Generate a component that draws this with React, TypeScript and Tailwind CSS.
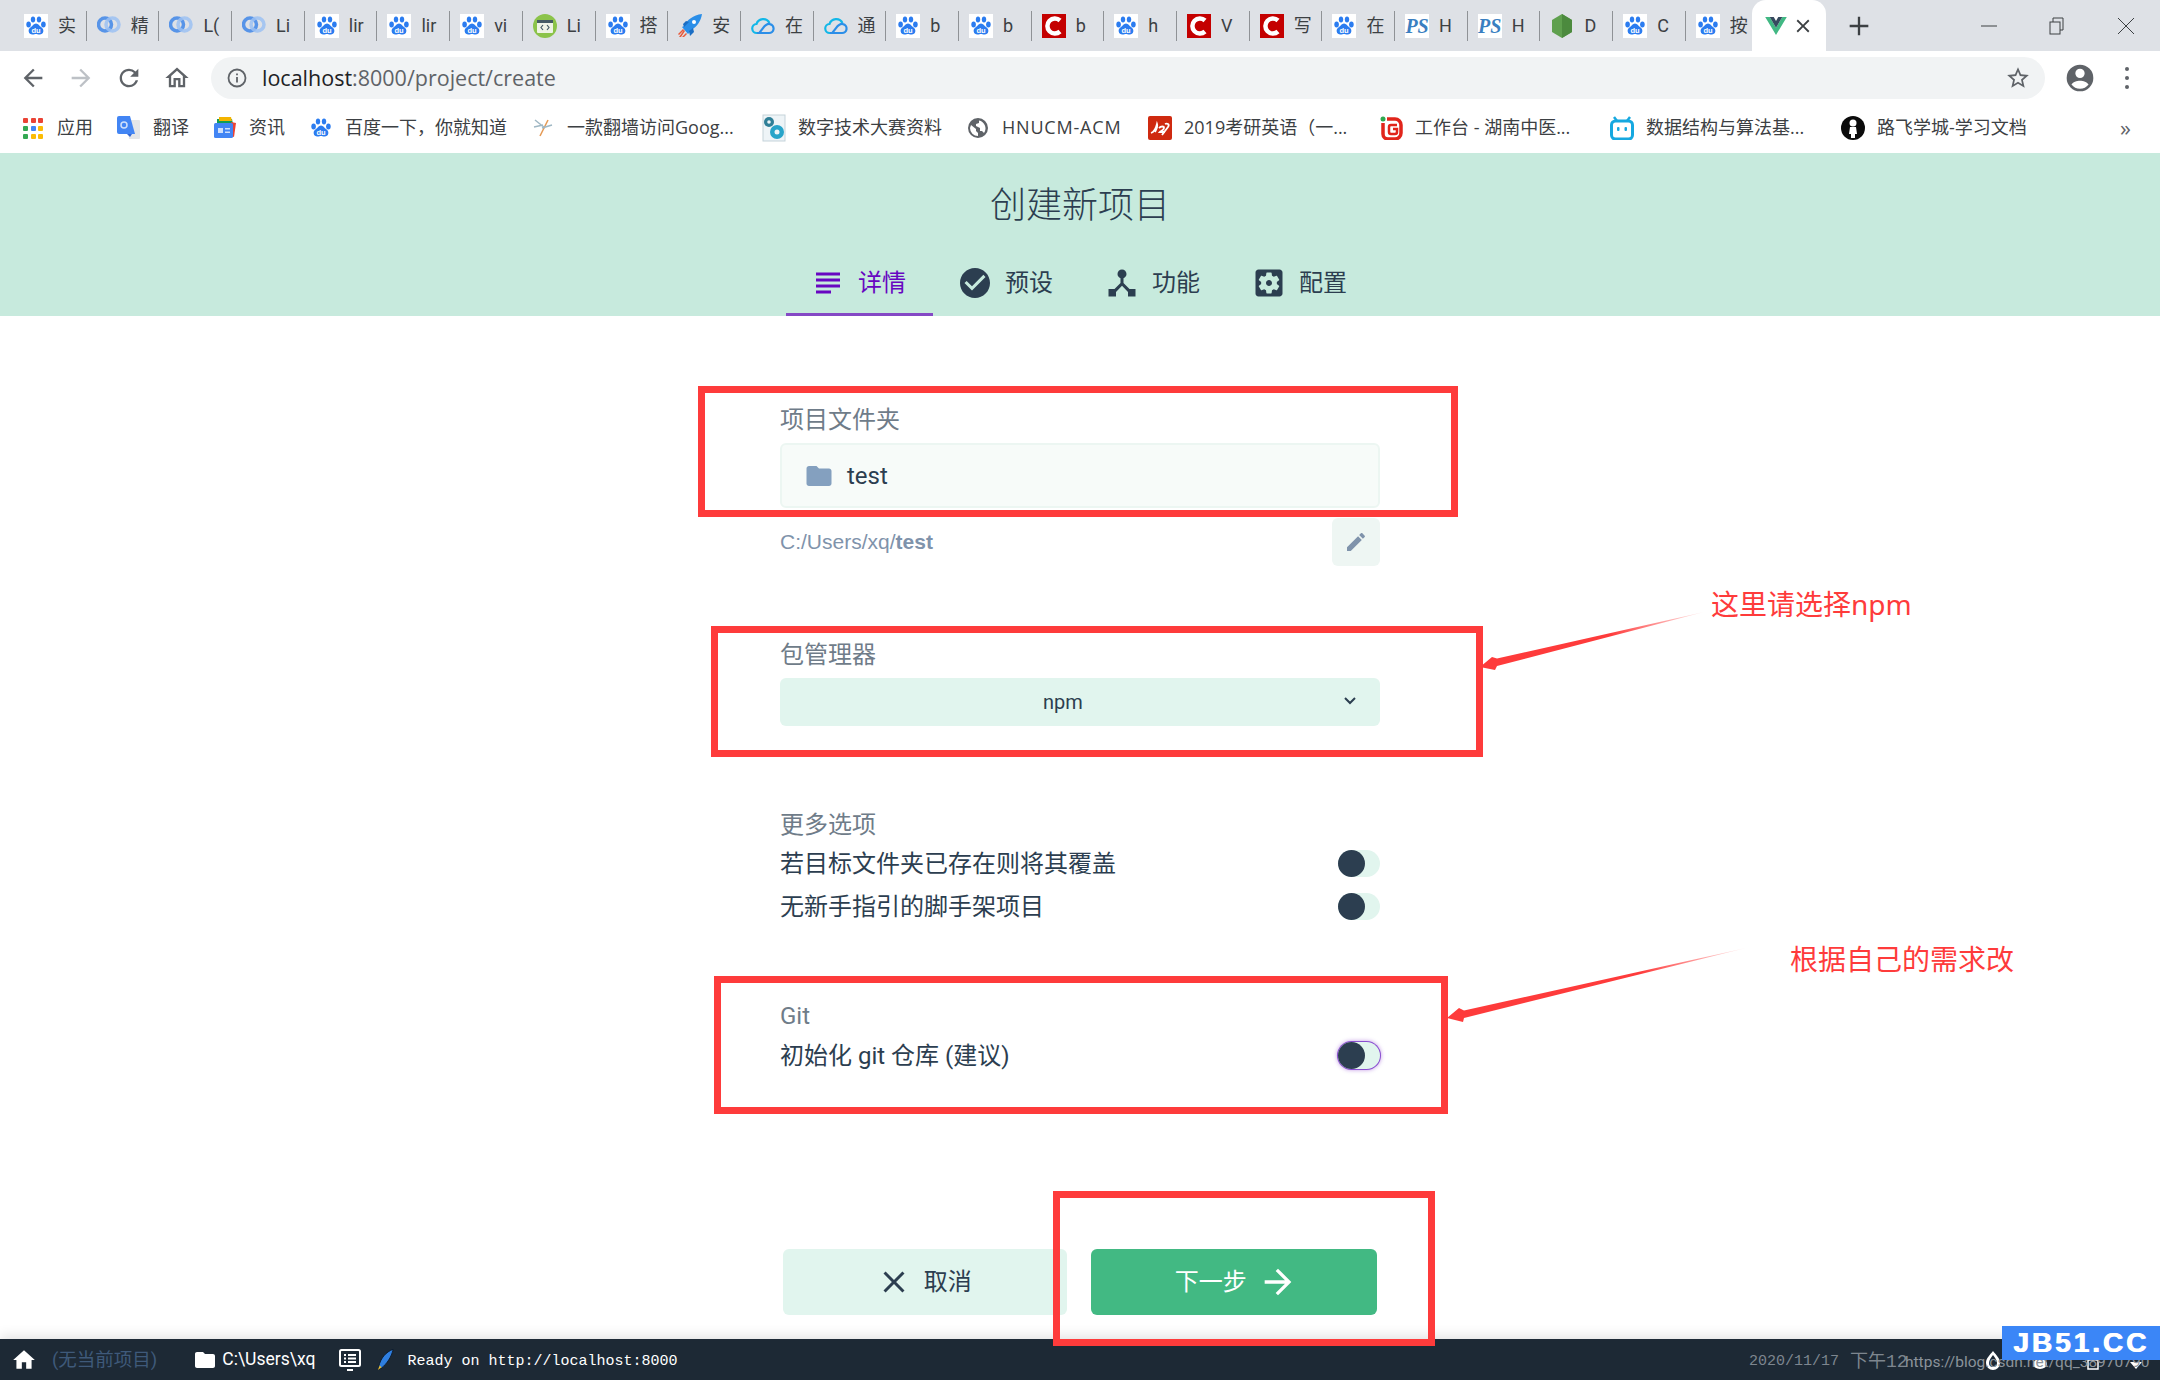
import React from "react";

const sans = "font-['Roboto','Noto_Sans_CJK_SC',sans-serif]";

const Baidu = ({ bg = true }: { bg?: boolean }) => (
  <svg viewBox="0 0 24 24" className="w-6 h-6 shrink-0">
    {bg && <rect width="24" height="24" fill="#fff" />}
    <g fill="#2b7cf0">
      <ellipse cx="4.6" cy="10.5" rx="2.3" ry="2.9" />
      <ellipse cx="9" cy="5.6" rx="2.2" ry="3" />
      <ellipse cx="15" cy="5.6" rx="2.2" ry="3" />
      <ellipse cx="19.4" cy="10.5" rx="2.3" ry="2.9" />
      <path d="M12 9.5c-2.4 0-3.2 2.4-5 3.6-1.8 1.2-2.6 2.6-2.3 4.4.4 2.4 2.4 3.2 4 3 1.5-.2 2.2-.6 3.3-.6s1.8.4 3.3.6c1.6.2 3.6-.6 4-3 .3-1.8-.5-3.200-2.300-4.400-1.800-1.200-2.600-3.600-5-3.600z" />
    </g>
    <text x="12" y="19" textAnchor="middle" fontSize="7.500" fontWeight="700" fill="#fff" fontFamily="Liberation Sans">du</text>
  </svg>
);

const CloudRings = () => (
  <svg viewBox="0 0 24 24" className="w-6 h-6 shrink-0" fill="none">
    <ellipse cx="8" cy="10.500" rx="6.500" ry="6.500" stroke="#3f86e8" strokeWidth="3.500" opacity="0.85" />
    <ellipse cx="15.500" cy="10.500" rx="6.500" ry="6.500" stroke="#9cc1f2" strokeWidth="3.500" opacity="0.85" />
  </svg>
);

const Rocket = () => (
  <svg viewBox="0 0 24 24" className="w-6 h-6 shrink-0">
    <path d="M24 0C15 1 9 6 6 12l-2 1 6 7 2-2c1-1 1-2 1-2 6-3 10-9 11-16z" fill="#2a8ee8" />
    <path d="M5 10l3-3 3 1-5 5zM15 14l1 4-4 4-1-5z" fill="#1b6ec4" />
    <path d="M1 23l5-7 1 1-4 6zM4 23l4-4 1 1-3 3zM0 20l5-5 1 1-5 5z" fill="#e8593a" />
    <circle cx="16" cy="8" r="2" fill="#fff" />
  </svg>
);

const GreenCode = () => (
  <svg viewBox="0 0 24 24" className="w-6 h-6 shrink-0">
    <circle cx="12" cy="12" r="12" fill="#8bc34a" />
    <rect x="4" y="6" width="16" height="13" rx="1" fill="#eef3e6" />
    <rect x="4" y="6" width="16" height="3" fill="#455a64" />
    <path d="M10 11l-2 2.500 2 2.500M14 11l2 2.500-2 2.500" stroke="#455a64" strokeWidth="1.200" fill="none" />
  </svg>
);

const TCloud = () => (
  <svg viewBox="0 0 24 24" className="w-6 h-6 shrink-0" fill="none" stroke="#12b7e8" strokeWidth="2.200">
    <path d="M6 19a4.500 4.500 0 0 1-.5-9A7 7 0 0 1 18.500 9" />
    <path d="M6 19h12a4.500 4.500 0 0 0 1-8.900c-3-.8-5 1.400-7 4l-3.500 4.500" stroke="#2b8ee8" />
  </svg>
);

const RedC = () => (
  <svg viewBox="0 0 24 24" className="w-6 h-6 shrink-0">
    <rect width="24" height="24" fill="#c40000" />
    <path d="M18 6.500a7.500 7.500 0 1 0 0 11" fill="none" stroke="#fff" strokeWidth="4.500" />
  </svg>
);

const Ps = () => (
  <span className="w-6 h-6 shrink-0 bg-white flex items-center justify-center text-[#3a7fc1] text-[20px] leading-6 italic font-bold font-['Liberation_Serif',serif]">
    PS
  </span>
);

const NodeHex = () => (
  <svg viewBox="0 0 24 24" className="w-6 h-6 shrink-0">
    <path d="M12 0l10 6v12l-10 6-10-6V6z" fill="#5fa04e" />
    <path d="M12 0l10 6v12l-10 6z" fill="#4c8a3e" />
  </svg>
);

const Vue = () => (
  <svg viewBox="0 0 24 20" className="w-[22px] h-[18px] shrink-0">
    <path d="M0 0h5l7 12 7-12h5L12 20z" fill="#41b883" />
    <path d="M5 0h4.500L12 4.500 14.500 0H19l-7 12z" fill="#35495e" />
  </svg>
);

const M = ({ d, className }: { d: string; className: string }) => (
  <svg viewBox="0 0 24 24" className={className} fill="currentColor">
    <path d={d} />
  </svg>
);

const paths = {
  subject: "M14 17H4v2h10v-2zm6-8H4v2h16V9zM4 15h16v-2H4v2zM4 5v2h16V5H4z",
  check: "M12 2C6.480 2 2 6.480 2 12s4.480 10 10 10 10-4.480 10-10S17.520 2 12 2zm-2 15l-5-5 1.410-1.410L10 14.170l7.590-7.590L19 8l-9 9z",
  hub: "M17 16l-4-4V8.820C14.160 8.400 15 7.300 15 6c0-1.660-1.340-3-3-3S9 4.340 9 6c0 1.300.840 2.400 2 2.820V12l-4 4H3v5h5v-3.050l4-4.200 4 4.200V21h5v-5h-4z",
  settings: "M12 10c-1.100 0-2 .9-2 2s.9 2 2 2 2-.9 2-2-.9-2-2-2zm7-7H5c-1.110 0-2 .9-2 2v14c0 1.100.890 2 2 2h14c1.110 0 2-.9 2-2V5c0-1.100-.890-2-2-2zm-1.750 9c0 .230-.020.460-.050.680l1.480 1.160c.130.110.170.300.080.450l-1.400 2.420c-.090.150-.270.210-.430.150l-1.740-.700c-.360.280-.760.510-1.180.690l-.260 1.850c-.030.170-.180.300-.350.300h-2.800c-.170 0-.320-.130-.350-.290l-.260-1.850c-.430-.180-.820-.410-1.180-.690l-1.740.700c-.160.060-.340 0-.430-.150l-1.400-2.420c-.090-.150-.050-.340.080-.450l1.480-1.160c-.030-.230-.050-.460-.050-.690 0-.230.020-.460.050-.680l-1.480-1.160c-.130-.110-.170-.300-.080-.450l1.400-2.420c.090-.150.270-.210.430-.150l1.740.700c.360-.280.760-.510 1.180-.690l.260-1.850c.030-.170.180-.300.350-.300h2.800c.170 0 .320.130.350.290l.260 1.850c.430.180.820.410 1.180.690l1.740-.700c.160-.060.340 0 .430.150l1.400 2.420c.090.150.050.340-.08.450l-1.480 1.160c.030.230.050.460.050.690z",
  folder: "M10 4H4c-1.100 0-1.990.9-1.990 2L2 18c0 1.100.9 2 2 2h16c1.100 0 2-.9 2-2V8c0-1.100-.9-2-2-2h-8l-2-2z",
  edit: "M3 17.250V21h3.750L17.810 9.940l-3.750-3.750L3 17.250zM20.710 7.040c.390-.390.390-1.020 0-1.410l-2.340-2.340c-.390-.390-1.020-.390-1.410 0l-1.830 1.830 3.750 3.750 1.830-1.830z",
  home: "M10 20v-6h4v6h5v-8h3L12 3 2 12h3v8z",
  close: "M19 6.410L17.590 5 12 10.590 6.410 5 5 6.410 10.590 12 5 17.590 6.410 19 12 13.410 17.590 19 19 17.590 13.410 12z",
  arrow: "M12 4l-1.410 1.410L16.170 11H4v2h12.170l-5.580 5.590L12 20l8-8z",
};

const tabs: [React.ReactNode, string][] = [
  [<Baidu />, "实"], [<CloudRings />, "精"], [<CloudRings />, "L("], [<CloudRings />, "Li"],
  [<Baidu />, "lir"], [<Baidu />, "lir"], [<Baidu />, "vi"], [<GreenCode />, "Li"],
  [<Baidu />, "搭"], [<Rocket />, "安"], [<TCloud />, "在"], [<TCloud />, "通"],
  [<Baidu />, "b"], [<Baidu />, "b"], [<RedC />, "b"], [<Baidu />, "h"],
  [<RedC />, "V"], [<RedC />, "写"], [<Baidu />, "在"], [<Ps />, "H"],
  [<Ps />, "H"], [<NodeHex />, "D"], [<Baidu />, "C"], [<Baidu />, "按"],
];

const AppsIcon = () => (
  <div className="w-6 h-6 shrink-0 grid grid-cols-3 gap-[3px] p-[2px]">
    {["#ea4335", "#ea4335", "#ea4335", "#34a853", "#4285f4", "#fbbc05", "#34a853", "#fbbc05", "#fbbc05"].map((c, i) => (
      <span key={i} className="w-[5px] h-[5px] rounded-[1px]" style={{ background: c }} />
    ))}
  </div>
);

const Translate = () => (
  <svg viewBox="0 0 24 24" className="w-6 h-6 shrink-0">
    <path d="M10 4h12a1 1 0 0 1 1 1v17a1 1 0 0 1-1 1H12z" fill="#e4e6e8" />
    <path d="M2 0h11l5 18H2a2 2 0 0 1-2-2V2a2 2 0 0 1 2-2z" fill="#4285f4" />
    <circle cx="7" cy="9" r="3" fill="none" stroke="#cfe0fb" strokeWidth="1.500" />
    <path d="M10 18l3 3 2-3z" fill="#3367d6" />
  </svg>
);

const News = () => (
  <svg viewBox="0 0 24 24" className="w-6 h-6 shrink-0">
    <path d="M4 3h15l1 5H4z" fill="#0f9d58" />
    <path d="M6 1h12l1 4H6z" fill="#f4b400" />
    <path d="M18 6l5 1-2 14-3-1z" fill="#ea4335" />
    <rect x="1" y="7" width="19" height="15" rx="1.500" fill="#4285f4" />
    <rect x="5" y="12" width="5" height="5" fill="#cfe0fb" />
    <rect x="12" y="12" width="5" height="1.500" fill="#cfe0fb" />
    <rect x="12" y="15.500" width="5" height="1.500" fill="#cfe0fb" />
  </svg>
);

const Dragonfly = () => (
  <svg viewBox="0 0 24 24" className="w-6 h-6 shrink-0" fill="none" strokeWidth="1.500">
    <path d="M17 4L9 20" stroke="#e59a55" />
    <path d="M4 4l10 8M21 9l-10 3M3 11l9-2" stroke="#9fb7c4" />
  </svg>
);

const Gears = () => (
  <svg viewBox="0 0 24 28" className="w-6 h-7 shrink-0">
    <rect x="1" y="1" width="22" height="26" fill="#eef4f7" stroke="#c5d3da" />
    <circle cx="7" cy="8" r="5" fill="#2f7f97" />
    <circle cx="15" cy="18" r="7" fill="#28a4c9" />
    <circle cx="15" cy="18" r="2.500" fill="#eef4f7" />
    <circle cx="7" cy="8" r="1.800" fill="#eef4f7" />
  </svg>
);

const Globe = () => (
  <svg viewBox="0 0 24 24" className="w-6 h-6 shrink-0" fill="#5f6368">
    <path d="M12 2a10 10 0 1 0 0 20 10 10 0 0 0 0-20zM4 12l1-3 5 4v2l2 2v3a8 8 0 0 1-8-8zm14 5l-2-2h-2v-3l-4-2V8l3-1V4.500a8 8 0 0 1 5 12.500z" />
  </svg>
);

const Kaoyan = () => (
  <svg viewBox="0 0 24 24" className="w-6 h-6 shrink-0">
    <rect width="24" height="24" rx="2" fill="#cf2a10" />
    <path d="M3 17c3-1 5-5 6-9 1 3-1 6-2 8M11 12c2-2 5-2 5 0s-3 3-4 4h5M17 8c2-1 5 0 3 3l-6 8" stroke="#fff" strokeWidth="1.800" fill="none" />
  </svg>
);

const IG = () => (
  <svg viewBox="0 0 24 24" className="w-6 h-6 shrink-0">
    <circle cx="4" cy="3" r="2.500" fill="#2fa84f" />
    <path d="M4 7v11a5 5 0 0 0 5 5h7a6 6 0 0 0 6-6V9a6 6 0 0 0-6-6H8" fill="none" stroke="#e1251b" strokeWidth="3.500" />
    <path d="M18 9h-6a2 2 0 0 0-2 2v5a2 2 0 0 0 2 2h4a2 2 0 0 0 2-2v-3h-4" fill="none" stroke="#e1251b" strokeWidth="2.500" />
  </svg>
);

const Bili = () => (
  <svg viewBox="0 0 24 24" className="w-6 h-6 shrink-0">
    <path d="M7 5L4 1M17 5l3-4" stroke="#16a8e0" strokeWidth="2.500" />
    <rect x="1.500" y="5" width="21" height="18" rx="4" fill="none" stroke="#16a8e0" strokeWidth="3" />
    <rect x="7" y="11" width="2.500" height="4" rx="1" fill="#16a8e0" />
    <rect x="14.500" y="11" width="2.500" height="4" rx="1" fill="#16a8e0" />
  </svg>
);

const Luffy = () => (
  <svg viewBox="0 0 24 24" className="w-6 h-6 shrink-0">
    <circle cx="12" cy="12" r="12" fill="#0b0b0b" />
    <circle cx="12" cy="7" r="3.500" fill="#fff" />
    <path d="M9 11h6l1 7h-2v4h-4v-4H8z" fill="#fff" />
  </svg>
);

const bookmarks = [
  { icon: <AppsIcon />, label: "应用", w: "w-[36px]" },
  { icon: <Translate />, label: "翻译", w: "w-[36px]" },
  { icon: <News />, label: "资讯", w: "w-[36px]" },
  { icon: <Baidu bg={false} />, label: "百度一下，你就知道", w: "w-[162px]" },
  { icon: <Dragonfly />, label: "一款翻墙访问Goog...", w: "w-[171px]" },
  { icon: <Gears />, label: "数字技术大赛资料", w: "w-[144px]" },
  { icon: <Globe />, label: "HNUCM-ACM", w: "w-[122px] tracking-[0.8px]" },
  { icon: <Kaoyan />, label: "2019考研英语（一...", w: "w-[171px]" },
  { icon: <IG />, label: "工作台 - 湖南中医...", w: "w-[171px]" },
  { icon: <Bili />, label: "数据结构与算法基...", w: "w-[171px]" },
  { icon: <Luffy />, label: "路飞学城-学习文档", w: "w-[151px]" },
];

const steps = [
  { label: "详情", icon: paths.subject, active: true },
  { label: "预设", icon: paths.check },
  { label: "功能", icon: paths.hub },
  { label: "配置", icon: paths.settings },
];

const Toggle = ({ focus }: { focus?: boolean }) => (
  <div
    className={`w-[42px] h-[27px] rounded-full bg-[#e1f5ee] ${
      focus ? "shadow-[0_0_0_1px_#8a4fd0,0_0_4px_1px_rgba(104,6,193,0.4)]" : ""
    }`}
  >
    <div className="w-[27px] h-[27px] rounded-full bg-[#2c3e50]" />
  </div>
);

const Row = ({ label, focus, className }: { label: string; focus?: boolean; className: string }) => (
  <div className={`flex items-center justify-between h-[30px] text-[24px] text-[#2c3e50] ${className}`}>
    <span className="pt-[2px]">{label}</span>
    <Toggle focus={focus} />
  </div>
);

const Label = ({ children, className }: { children: string; className: string }) => (
  <div className={`h-[30px] leading-[30px] text-[24px] text-[#6f7c89] ${className}`}>{children}</div>
);

export default function App() {
  return (
    <div className={`relative w-[2160px] h-[1380px] overflow-hidden flex flex-col bg-white ${sans}`}>
      {/* browser tabs */}
      <div className="h-[51px] shrink-0 bg-[#dee1e6] flex pl-[14px] text-[18px] text-[#3c4043]">
        {tabs.map(([icon, title], i) => (
          <div key={i} className="w-[72.7px] h-full flex items-center relative pl-[10px]">
            {icon}
            <span className="ml-[10px] w-[26px] overflow-hidden whitespace-nowrap">{title}</span>
            {i < 23 && <span className="absolute right-0 top-[11px] h-[30px] w-px bg-[#8f9296]" />}
          </div>
        ))}
        <div className="w-[74px] h-full -ml-[7px] bg-white rounded-t-[14px] flex items-center pl-[13px]">
          <Vue />
          <M d={paths.close} className="w-[22px] h-[22px] ml-[5px] text-[#3c4043]" />
        </div>
        <M d="M11 4h2v7h7v2h-7v7h-2v-7H4v-2h7z" className="w-[28px] h-[28px] self-center ml-[19px] text-[#3c4043]" />
        <div className="ml-auto flex items-center text-[#3c4043]">
          <svg viewBox="0 0 16 16" className="w-4 h-4 mr-[52px]" stroke="currentColor" fill="none"><path d="M0 8h16" /></svg>
          <svg viewBox="0 0 16 18" className="w-4 h-[18px] mr-[52px]" stroke="currentColor" fill="none"><rect x="1" y="5" width="10" height="12" /><path d="M4 5V1h10v12h-3" /></svg>
          <svg viewBox="0 0 18 18" className="w-[18px] h-[18px] mr-[25px]" stroke="currentColor" fill="none"><path d="M1 1l16 16M17 1L1 17" /></svg>
        </div>
      </div>

      {/* toolbar */}
      <div className="h-[54px] shrink-0 bg-white flex items-center pl-[19px] text-[#5f6368]">
        <M d="M20 11H7.830l5.590-5.590L12 4l-8 8 8 8 1.410-1.410L7.830 13H20z" className="w-[28px] h-[28px]" />
        <M d={paths.arrow} className="w-[28px] h-[28px] ml-[20px] text-[#bdc1c6]" />
        <M d="M17.650 6.350A7.958 7.958 0 0 0 12 4c-4.420 0-7.990 3.580-7.990 8s3.570 8 7.990 8c3.730 0 6.840-2.550 7.730-6h-2.080A5.990 5.990 0 0 1 12 18c-3.310 0-6-2.690-6-6s2.690-6 6-6c1.660 0 3.140.690 4.220 1.780L13 11h7V4l-2.350 2.350z" className="w-[28px] h-[28px] ml-[20px]" />
        <M d="M12 5.690l5 4.500V18h-2v-6H9v6H7v-7.810l5-4.500M12 3L2 12h3v8h6v-6h2v6h6v-8h3L12 3z" className="w-[28px] h-[28px] ml-[20px]" />
        <div className="ml-[20px] w-[1834px] h-[42px] rounded-full bg-[#f1f3f4] flex items-center pl-[16px] pr-[14px] text-[21.500px] font-['Open_Sans',sans-serif]">
          <svg viewBox="0 0 20 20" className="w-5 h-5" fill="none" stroke="#5f6368" strokeWidth="1.800">
            <circle cx="10" cy="10" r="8.500" />
            <path d="M10 9v5.500M10 5.500v1.800" />
          </svg>
          <span className="ml-[15px]">
            <span className="text-[#202124]">localhost</span>:8000/project/create
          </span>
          <M d="M22 9.240l-7.190-.620L12 2 9.190 8.630 2 9.240l5.460 4.730L5.820 21 12 17.270 18.180 21l-1.630-7.030L22 9.240zM12 15.400l-3.760 2.270 1-4.280-3.320-2.880 4.380-.380L12 6.100l1.710 4.040 4.380.380-3.320 2.880 1 4.280L12 15.400z" className="w-[26px] h-[26px] ml-auto" />
        </div>
        <M d="M12 2a10 10 0 1 0 0 20 10 10 0 0 0 0-20zm0 3a3.500 3.500 0 1 1 0 7 3.500 3.500 0 0 1 0-7zm0 15a8 8 0 0 1-6.400-3.200c.9-1.800 4-2.800 6.400-2.800s5.500 1 6.400 2.800A8 8 0 0 1 12 20z" className="w-[32px] h-[32px] ml-[19px]" />
        <div className="ml-[29px] flex flex-col gap-[5px]">
          <span className="w-1 h-1 rounded-full bg-[#5f6368]" />
          <span className="w-1 h-1 rounded-full bg-[#5f6368]" />
          <span className="w-1 h-1 rounded-full bg-[#5f6368]" />
        </div>
      </div>

      {/* bookmarks */}
      <div className="h-[48px] shrink-0 bg-white flex items-center pl-[21px] pb-[3px] gap-[24px] text-[18px] text-[#3c4043] font-['Open_Sans','Noto_Sans_CJK_SC',sans-serif]">
        {bookmarks.map((b) => (
          <div key={b.label} className="flex items-center gap-[12px] shrink-0">
            {b.icon}
            <span className={`${b.w} whitespace-nowrap overflow-hidden`}>{b.label}</span>
          </div>
        ))}
        <span className="absolute left-[2120px] text-[22px] text-[#5f6368]">»</span>
      </div>

      {/* vue ui header */}
      <div className="h-[163px] shrink-0 bg-[#c7eadd] flex flex-col items-center text-[#2c3e50]">
        <div className="h-[94px] pt-[28px] text-[36px] leading-[50px] font-light">创建新项目</div>
        <div className="mt-auto flex">
          {steps.map((s) => (
            <div
              key={s.label}
              className={`w-[147px] h-[69px] pt-[6px] flex items-center pl-[24px] gap-[12px] text-[24px] ${
                s.active ? "text-[#6806c1] border-b-[3px] border-[#8549c5]" : "border-b-[3px] border-transparent"
              }`}
            >
              <M d={s.icon} className="w-[36px] h-[36px] shrink-0" />
              <span>{s.label}</span>
            </div>
          ))}
        </div>
      </div>

      {/* form */}
      <div className="flex-1 flex flex-col items-center">
        <div className="w-[600px] flex flex-col">
          <Label className="mt-[89px]">项目文件夹</Label>
          <div className="mt-[8px] h-[65px] rounded-[6px] bg-[#f7fbf9] border-2 border-[#ecf6f2] flex items-center pl-[22px] text-[24px] text-[#2c3e50]">
            <M d={paths.folder} className="w-[30px] h-[30px] text-[#84a0bf]" />
            <span className="ml-[13px]">test</span>
          </div>
          <div className="mt-[10px] h-[48px] flex items-center justify-between text-[21px] text-[#7f93ab] font-['Liberation_Sans',sans-serif]">
            <span>
              C:/Users/xq/<b>test</b>
            </span>
            <div className="w-[48px] h-[48px] rounded-[6px] bg-[#eef6f3] flex items-center justify-center">
              <M d={paths.edit} className="w-[24px] h-[24px] text-[#7f93ab]" />
            </div>
          </div>
          <Label className="mt-[74px]">包管理器</Label>
          <div className="mt-[8px] h-[48px] rounded-[6px] bg-[#e1f5ee] relative flex items-center justify-center pr-[34px] text-[20px] text-[#2c3e50]">
            <span>npm</span>
            <svg viewBox="0 0 12 8" className="absolute right-[24px] top-[19px] w-[12px] h-[8px]" fill="none" stroke="#2c3e50" strokeWidth="2">
              <path d="M1 1l5 5 5-5" />
            </svg>
          </div>
          <Label className="mt-[84px]">更多选项</Label>
          <Row className="mt-[8px]" label="若目标文件夹已存在则将其覆盖" />
          <Row className="mt-[13px]" label="无新手指引的脚手架项目" />
          <Label className="mt-[80px]">Git</Label>
          <Row className="mt-[9px]" label="初始化 git 仓库 (建议)" focus />
        </div>
        <div className="mt-[179px] w-[594px] flex gap-[24px] text-[24px]">
          <div className="flex-1 h-[66px] rounded-[6px] bg-[#e1f5ee] text-[#2c3e50] flex items-center justify-center gap-[12px] pr-[2px]">
            <M d={paths.close} className="w-[36px] h-[36px]" />
            <span>取消</span>
          </div>
          <div className="flex-1 h-[66px] rounded-[6px] bg-[#42b983] text-white flex items-center justify-center gap-[11px] pl-[5px]">
            <span>下一步</span>
            <M d={paths.arrow} className="w-[40px] h-[40px]" />
          </div>
        </div>
      </div>

      {/* status bar */}
      <div className="h-[41px] shrink-0 bg-[#1d2935] flex items-center pl-[11px] text-white shadow-[0_-3px_12px_rgba(0,0,0,0.12)] z-10">
        <M d={paths.home} className="w-[26px] h-[26px]" />
        <span className="ml-[15px] pt-[2px] text-[18.500px] text-[#3f5a7a]">(无当前项目)</span>
        <M d={paths.folder} className="ml-[36px] w-[24px] h-[24px]" />
        <span className="ml-[5px] text-[17.500px]">C:\Users\xq</span>
        <svg viewBox="0 0 22 22" className="ml-[24px] w-[22px] h-[22px]" fill="none" stroke="#fff" strokeWidth="2">
          <rect x="1" y="1" width="20" height="16" rx="1.500" />
          <path d="M5 6h2M9 6h8M5 9.500h2M9 9.500h8M5 13h2M9 13h8M8 21h6" />
        </svg>
        <svg viewBox="0 0 20 24" className="ml-[16px] w-[18px] h-[22px]">
          <path d="M18 0C10 3 4 10 2 19l3 2C11 16 16 9 18 0z" fill="#2f7fe0" stroke="#0c1a2a" />
          <path d="M1 23l2-5 2 2z" fill="#f2c230" />
        </svg>
        <span className="ml-[12px] pt-[6px] text-[15px] font-['Liberation_Mono',monospace]">Ready on http://localhost:8000</span>
        <div className="ml-auto w-[411px] pt-[5px] flex items-center gap-[11px] text-[#7d868f] whitespace-nowrap">
          <span className="text-[15px] font-['Liberation_Mono',monospace]">2020/11/17</span>
          <span className="text-[18px] font-['Liberation_Mono','Noto_Sans_CJK_SC',monospace]">下午12</span>
        </div>
      </div>

      {/* annotations over the page */}
      <div className="absolute left-[698px] top-[386px] w-[760px] h-[131px] border-[7px] border-[#fe3b3b]" />
      <div className="absolute left-[711px] top-[626px] w-[772px] h-[131px] border-[7px] border-[#fe3b3b]" />
      <div className="absolute left-[714px] top-[976px] w-[734px] h-[138px] border-[7px] border-[#fe3b3b]" />
      <div className="absolute left-[1053px] top-[1191px] w-[382px] h-[155px] border-[7px] border-[#fe3b3b] z-20" />
      <svg className="absolute left-0 top-0 w-[2160px] h-[1380px] pointer-events-none" viewBox="0 0 2160 1380">
        <defs>
          <linearGradient id="fade1" gradientUnits="userSpaceOnUse" x1="1704" y1="612" x2="1610" y2="635">
            <stop offset="0" stopColor="#fe3b3b" stopOpacity="0.1" />
            <stop offset="1" stopColor="#fe3b3b" />
          </linearGradient>
          <linearGradient id="fade2" gradientUnits="userSpaceOnUse" x1="1746" y1="948" x2="1640" y2="973">
            <stop offset="0" stopColor="#fe3b3b" stopOpacity="0.1" />
            <stop offset="1" stopColor="#fe3b3b" />
          </linearGradient>
        </defs>
        <polygon points="1704,612 1497,658.500 1492,657 1480,667 1495,670 1497,666" fill="url(#fade1)" />
        <polygon points="1746,948 1464,1010.500 1459,1008 1447,1018 1463,1022 1464,1018" fill="url(#fade2)" />
      </svg>
      <span className="absolute left-[1711px] top-[585px] text-[28px] leading-[38px] text-[#fe3b3b] whitespace-nowrap font-['Noto_Sans','Noto_Sans_CJK_SC',sans-serif]">这里请选择npm</span>
      <span className="absolute left-[1790px] top-[942px] text-[28px] leading-[38px] text-[#fe3b3b] whitespace-nowrap">根据自己的需求改</span>

      {/* tray icons poking out under the badge */}
      <svg className="absolute left-[1980px] top-[1350px] z-10 w-[170px] h-[22px]" viewBox="0 0 170 22" fill="#fff">
        <path d="M13 1c-3 4-7 7-7 12a7 7 0 0 0 14 0c0-5-4-8-7-12zm0 4c2 3 4 5 4 8a4 4 0 0 1-8 0c0-3 2-5 4-8z" />
        <ellipse cx="60" cy="14" rx="7" ry="5" />
        <rect x="108" y="10" width="10" height="9" fill="none" stroke="#fff" strokeWidth="1.500" />
        <path d="M150 12h12l-6 7z" />
      </svg>

      {/* csdn watermark and site badge */}
      <span className="absolute left-[1905px] top-[1350px] z-20 text-[15.500px] leading-[24px] text-[#8b939b] whitespace-nowrap">https://blog.csdn.net/qq_38970790</span>
      <div className="absolute left-[2002px] top-[1326px] w-[158px] h-[34px] z-30 bg-[#3b86f7] flex items-center justify-center text-white text-[28px] font-bold tracking-[3px] [text-shadow:1px_0_0_#fff] font-['Liberation_Sans',sans-serif]">
        JB51.CC
      </div>
    </div>
  );
}
